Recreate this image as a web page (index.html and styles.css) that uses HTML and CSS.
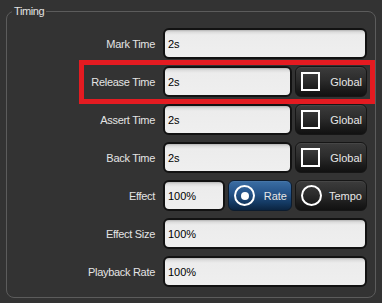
FILE: index.html
```html
<!DOCTYPE html>
<html>
<head>
<meta charset="utf-8">
<link rel="stylesheet" href="styles.css">
</head>
<body>
<fieldset class="group">
  <legend class="legend">Timing</legend>
  <div class="rows">
    <div class="lbl">Mark Time</div>
    <div class="ctrl"><div class="field">2s</div></div>

    <div class="lbl">Release Time</div>
    <div class="ctrl"><div class="field">2s</div><div class="btn btn-global"><span class="check"></span><span>Global</span></div></div>

    <div class="lbl">Assert Time</div>
    <div class="ctrl"><div class="field">2s</div><div class="btn btn-global"><span class="check"></span><span>Global</span></div></div>

    <div class="lbl">Back Time</div>
    <div class="ctrl"><div class="field">2s</div><div class="btn btn-global"><span class="check"></span><span>Global</span></div></div>

    <div class="lbl">Effect</div>
    <div class="ctrl"><div class="field field-short">100%</div><div class="btn btn-rate active"><span class="radio on"></span><span>Rate</span></div><div class="btn btn-tempo"><span class="radio"></span><span>Tempo</span></div></div>

    <div class="lbl">Effect Size</div>
    <div class="ctrl"><div class="field">100%</div></div>

    <div class="lbl">Playback Rate</div>
    <div class="ctrl"><div class="field">100%</div></div>
  </div>
</fieldset>
<div class="highlight"></div>
</body>
</html>
```
FILE: styles.css
```css
html, body {
  margin: 0;
  padding: 0;
  background: #333333;
  width: 382px;
  height: 303px;
  overflow: hidden;
  font-family: "Liberation Sans", Arial, sans-serif;
  font-size: 11px;
}

.group {
  margin: 5px 6px 0 6px;
  padding: 0;
  border: 1px solid #5c5c5c;
  border-radius: 8px;
  min-width: 0;
}

.legend {
  margin-left: 5px;
  padding: 0 2px;
  line-height: 13px;
  color: #e2e2e2;
  letter-spacing: -0.4px;
}

.rows {
  display: grid;
  grid-template-columns: 148px 204px;
  grid-auto-rows: 31px;
  column-gap: 8px;
  row-gap: 7px;
  padding: 10px 0 10px 0;
}

.lbl {
  display: flex;
  align-items: center;
  justify-content: flex-end;
  color: #e4e4e4;
  letter-spacing: -0.3px;
  white-space: nowrap;
}

.ctrl {
  display: flex;
  gap: 3px;
}

.field {
  box-sizing: border-box;
  flex: 1;
  display: flex;
  align-items: center;
  padding-left: 3px;
  border: 2px solid #121212;
  border-radius: 6px;
  background: linear-gradient(to bottom, #b4b4b4 0, #dcdcdc 2px, #ececec 5px, #efefef 100%);
  color: #000;
}

.field-short {
  flex: 0 0 62px;
}

.btn {
  box-sizing: border-box;
  display: flex;
  align-items: center;
  justify-content: space-between;
  padding: 0 4px 0 5px;
  border: 1px solid #161616;
  border-radius: 6px;
  background: linear-gradient(to bottom, #3c3c3c 0, #2c2c2c 45%, #1a1a1a 80%, #111 100%);
  box-shadow: inset 0 1px 0 rgba(255,255,255,0.06);
  color: #e6e6e6;
}

.btn-global {
  flex: 0 0 72px;
}

.btn-rate {
  flex: 0 0 64px;
}

.btn-tempo {
  flex: 1;
}

.btn.active {
  background: linear-gradient(to bottom, #3b6ea4 0, #26548a 40%, #143a63 75%, #0b2440 100%);
  border-color: #0d1c2e;
}

.check {
  box-sizing: border-box;
  width: 19px;
  height: 19px;
  border: 2px solid #ffffff;
  background: linear-gradient(to bottom, #3a3a3a, #1c1c1c);
}

.radio {
  box-sizing: border-box;
  width: 21px;
  height: 21px;
  border: 2.5px solid #ffffff;
  border-radius: 50%;
  display: flex;
  align-items: center;
  justify-content: center;
}

.radio.on::after {
  content: "";
  width: 8px;
  height: 8px;
  border-radius: 50%;
  background: #ffffff;
}

.highlight {
  position: absolute;
  left: 79px;
  top: 60px;
  width: 296px;
  height: 44px;
  box-sizing: border-box;
  border: 5px solid #e41b21;
}
```
